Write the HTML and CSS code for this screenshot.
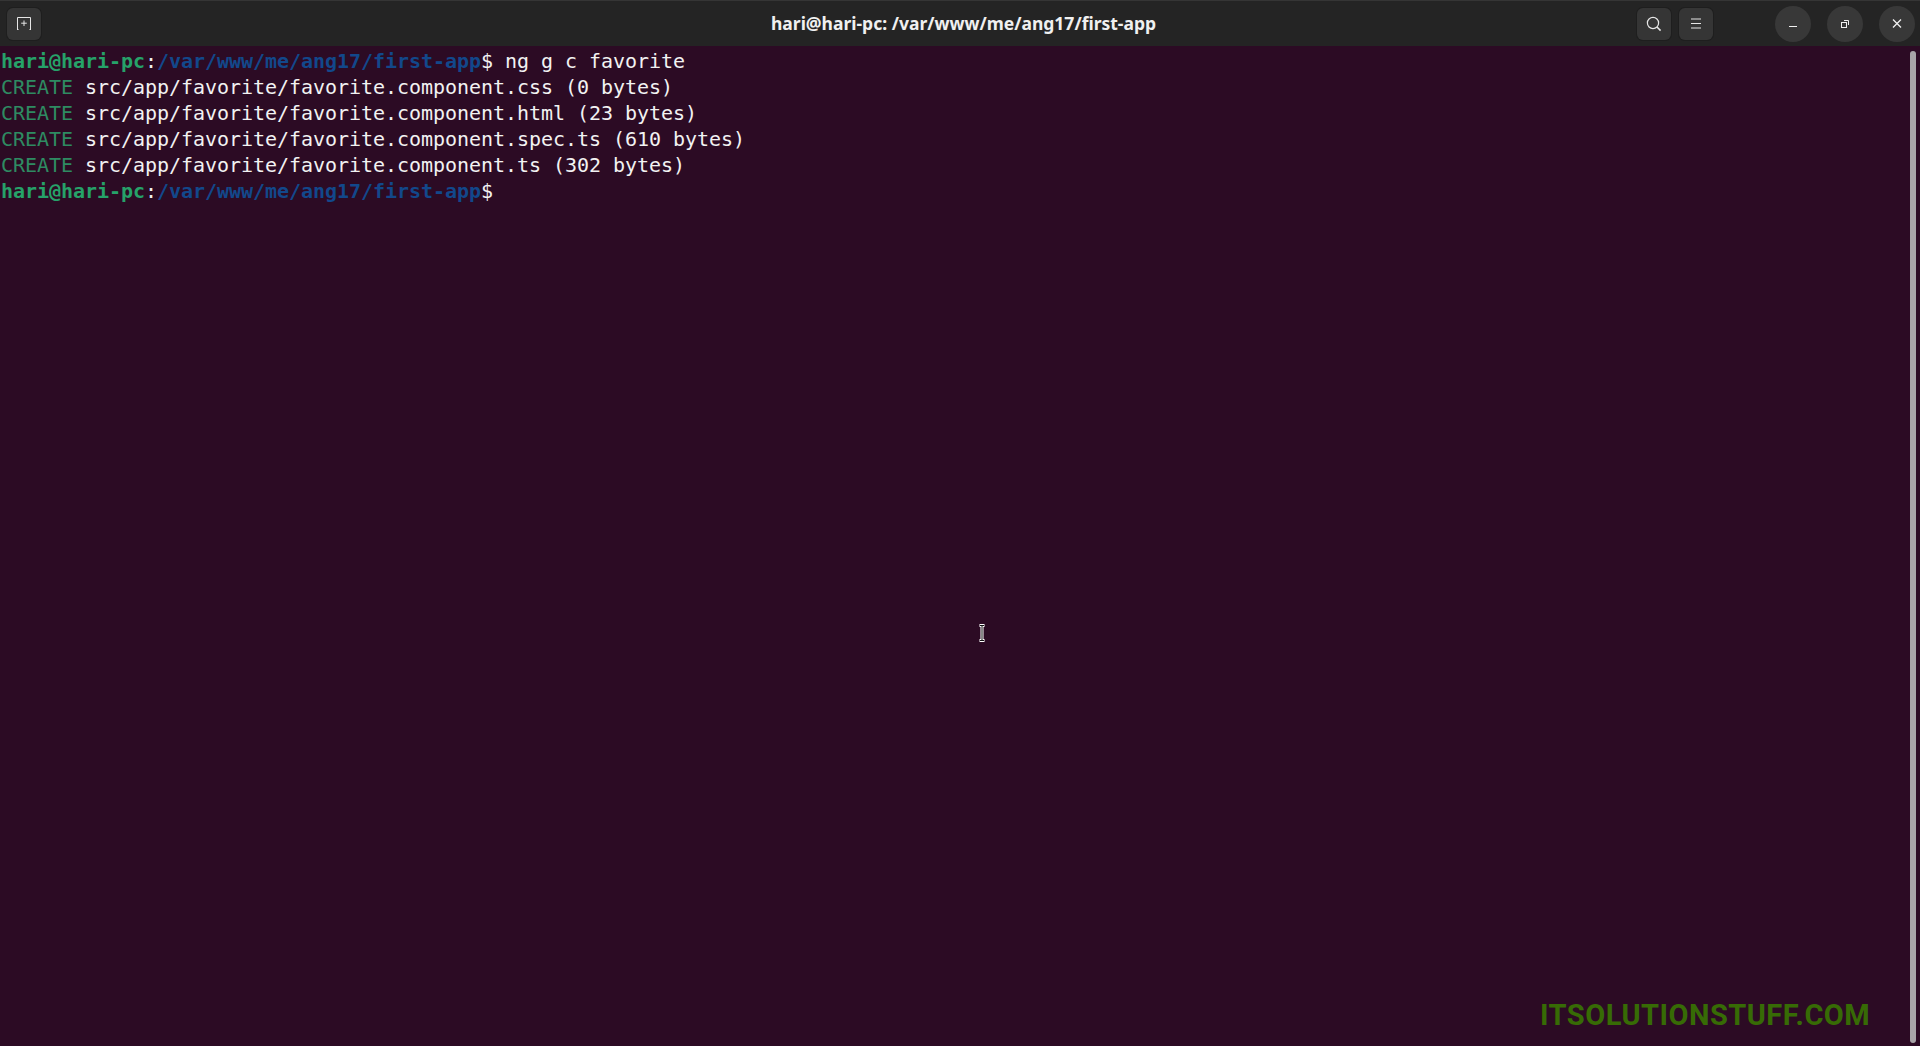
FILE: index.html
```html
<!DOCTYPE html>
<html lang="en">
<head>
<meta charset="utf-8">
<title>hari@hari-pc: /var/www/me/ang17/first-app</title>
<link rel="stylesheet" href="styles.css">
</head>
<body>
<div class="window">
  <header class="titlebar">
    <div class="bar-left">
      <button class="tool-btn" aria-label="New tab">
        <svg width="16" height="16" viewBox="0 0 16 16" fill="none" stroke="#e6e6e6" stroke-width="1"><path d="M1.5 13V1.5H14.5V13M1 13.5H2.5M13.5 13.5H15M8 4.5V10M5.2 7.2H10.8"/></svg>
      </button>
    </div>
    <div class="title">hari@hari-pc: /var/www/me/ang17/first-app</div>
    <div class="bar-right">
      <div class="tools">
        <button class="tool-btn" aria-label="Search">
          <svg width="16" height="16" viewBox="0 0 16 16" fill="none" stroke="#e6e6e6" stroke-width="1.2"><circle cx="7" cy="7" r="5.6"/><path d="M11 11L14.6 14.6" stroke-width="1.5"/></svg>
        </button>
        <button class="tool-btn" aria-label="Menu">
          <svg width="16" height="16" viewBox="0 0 16 16" fill="none" stroke="#e6e6e6" stroke-width="1"><path d="M3 3H13M3 7.5H13M3 12H13"/></svg>
        </button>
      </div>
      <div class="controls">
        <button class="win-btn" aria-label="Minimize">
          <svg width="16" height="16" viewBox="0 0 16 16" fill="none" stroke="#f0f0f0" stroke-width="1"><path d="M4 10.5H12"/></svg>
        </button>
        <button class="win-btn" aria-label="Restore">
          <svg width="16" height="16" viewBox="0 0 16 16" fill="none" stroke="#f0f0f0" stroke-width="1"><rect x="4.5" y="6.5" width="5" height="5"/><path d="M7 4.5H11.5V9"/></svg>
        </button>
        <button class="win-btn" aria-label="Close">
          <svg width="16" height="16" viewBox="0 0 16 16" fill="none" stroke="#f0f0f0" stroke-width="1.3"><path d="M4 3.5L12 11.5M12 3.5L4 11.5"/></svg>
        </button>
      </div>
    </div>
  </header>
  <main class="terminal">
    <div class="line"><span class="user">hari@hari-pc</span>:<span class="path">/var/www/me/ang17/first-app</span>$ ng g c favorite</div>
    <div class="line"><span class="create">CREATE</span> src/app/favorite/favorite.component.css (0 bytes)</div>
    <div class="line"><span class="create">CREATE</span> src/app/favorite/favorite.component.html (23 bytes)</div>
    <div class="line"><span class="create">CREATE</span> src/app/favorite/favorite.component.spec.ts (610 bytes)</div>
    <div class="line"><span class="create">CREATE</span> src/app/favorite/favorite.component.ts (302 bytes)</div>
    <div class="line"><span class="user">hari@hari-pc</span>:<span class="path">/var/www/me/ang17/first-app</span>$</div>
    <svg class="ibeam" width="10" height="18" viewBox="0 0 10 18" fill="none"><path d="M2.5 1.5H7.5M2.5 16.5H7.5M5 1.5V16.5" stroke="#fff" stroke-width="3"/><path d="M3 1.5H7M3 16.5H7M5 2V16" stroke="#111" stroke-width="1"/></svg>
    <div class="scrollbar"></div>
    <div class="watermark">ITSOLUTIONSTUFF.COM</div>
  </main>
</div>
</body>
</html>
```

FILE: styles.css
```css
* { box-sizing: border-box; }
html, body { margin: 0; height: 100%; overflow: hidden; background: #2c0b24; }
.window { display: flex; flex-direction: column; height: 1046px; }
.titlebar {
  flex: 0 0 46px;
  display: flex;
  align-items: center;
  justify-content: space-between;
  position: relative;
  padding: 0 5px 0 7px;
  background: #242424;
  border-top: 1px solid #353535;
}
.bar-left, .bar-right, .tools, .controls { display: flex; align-items: center; }
.tools { gap: 8px; margin-right: 62px; }
.controls { gap: 16px; }
.title {
  position: absolute;
  left: 7px;
  right: 0;
  top: 12px;
  text-align: center;
  font: 700 17.5px/20px "Noto Sans", "Open Sans", sans-serif;
  color: #f0f0f0;
}
button { padding: 0; border: 0; display: flex; align-items: center; justify-content: center; }
.tool-btn {
  width: 34px;
  height: 32px;
  border-radius: 6px;
  background: #353535;
  box-shadow: 0 0 0 1px #1e1e1e;
}
.win-btn { width: 36px; height: 36px; border-radius: 50%; background: #383838; }
.terminal {
  flex: 1;
  position: relative;
  padding: 2px 0 0 1px;
  background: #2c0b24;
  color: #f2f2f2;
  font: 20px/26px "DejaVu Sans Mono", monospace;
  letter-spacing: -0.04px;
  overflow: hidden;
}
.line { height: 26px; white-space: pre; }
.user { color: #26a269; font-weight: 700; }
.path { color: #12488b; font-weight: 700; }
.create { color: #2e8b62; }
.ibeam { position: absolute; left: 977px; top: 578px; }
.scrollbar {
  position: absolute;
  right: 4px;
  top: 5px;
  bottom: 3px;
  width: 6px;
  border-radius: 3px;
  background: #a8a4a8;
}
.watermark {
  position: absolute;
  left: 1540px;
  top: 952px;
  font: 700 29px/34px Roboto, sans-serif;
  letter-spacing: 0.5px;
  color: #376b05;
}
```
